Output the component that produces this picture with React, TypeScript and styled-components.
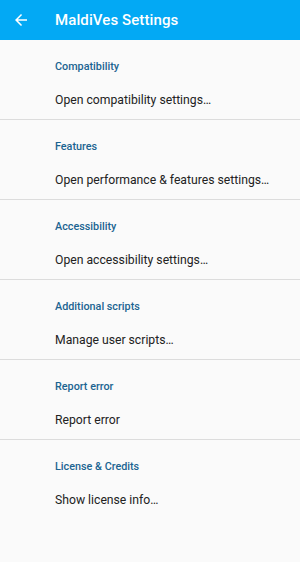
import React from "react";
import styled, { createGlobalStyle } from "styled-components";

const Global = createGlobalStyle`
  html, body { margin: 0; padding: 0; background: #fafafa; }
  body { font-family: Roboto, "Noto Sans", sans-serif; }
`;

const Page = styled.div`
  width: 300px;
  min-height: 562px;
  background: #fafafa;
  display: flex;
  flex-direction: column;
`;

const Toolbar = styled.header`
  height: 40px;
  background: #03a9f4;
  display: flex;
  align-items: center;
  padding-left: 12px;
  gap: 25px;
  box-sizing: border-box;
`;

const Title = styled.h1`
  margin: 0;
  color: #ffffff;
  font-size: 15px;
  font-weight: 500;
  letter-spacing: 0.1px;
`;

const BackButton = styled.div`
  width: 18px;
  height: 18px;
  display: flex;
  align-items: center;
  justify-content: center;
`;

const Section = styled.section<{ $last?: boolean }>`
  height: 80px;
  box-sizing: border-box;
  padding-left: 55px;
  display: flex;
  flex-direction: column;
  border-bottom: ${(p) => (p.$last ? "none" : "1px solid #dcdcdc")};
`;

const Category = styled.div`
  margin-top: 20px;
  height: 14px;
  line-height: 14px;
  font-size: 10.8px;
  font-weight: 500;
  color: #1b6491;
`;

const Item = styled.div`
  margin-top: 17px;
  height: 18px;
  line-height: 18px;
  font-size: 12.2px;
  color: #222222;
`;

const sections = [
  { cat: "Compatibility", item: "Open compatibility settings…" },
  { cat: "Features", item: "Open performance & features settings…" },
  { cat: "Accessibility", item: "Open accessibility settings…" },
  { cat: "Additional scripts", item: "Manage user scripts…" },
  { cat: "Report error", item: "Report error" },
  { cat: "License & Credits", item: "Show license info…" },
];

export default function App() {
  return (
    <Page>
      <Global />
      <Toolbar>
        <BackButton>
          <svg width="18" height="18" viewBox="0 0 24 24">
            <path d="M20 11H7.83l5.59-5.59L12 4l-8 8 8 8 1.41-1.41L7.83 13H20v-2z" fill="#fff" />
          </svg>
        </BackButton>
        <Title>MaldiVes Settings</Title>
      </Toolbar>
      {sections.map((s, i) => (
        <Section key={s.cat} $last={i === sections.length - 1}>
          <Category>{s.cat}</Category>
          <Item>{s.item}</Item>
        </Section>
      ))}
    </Page>
  );
}
